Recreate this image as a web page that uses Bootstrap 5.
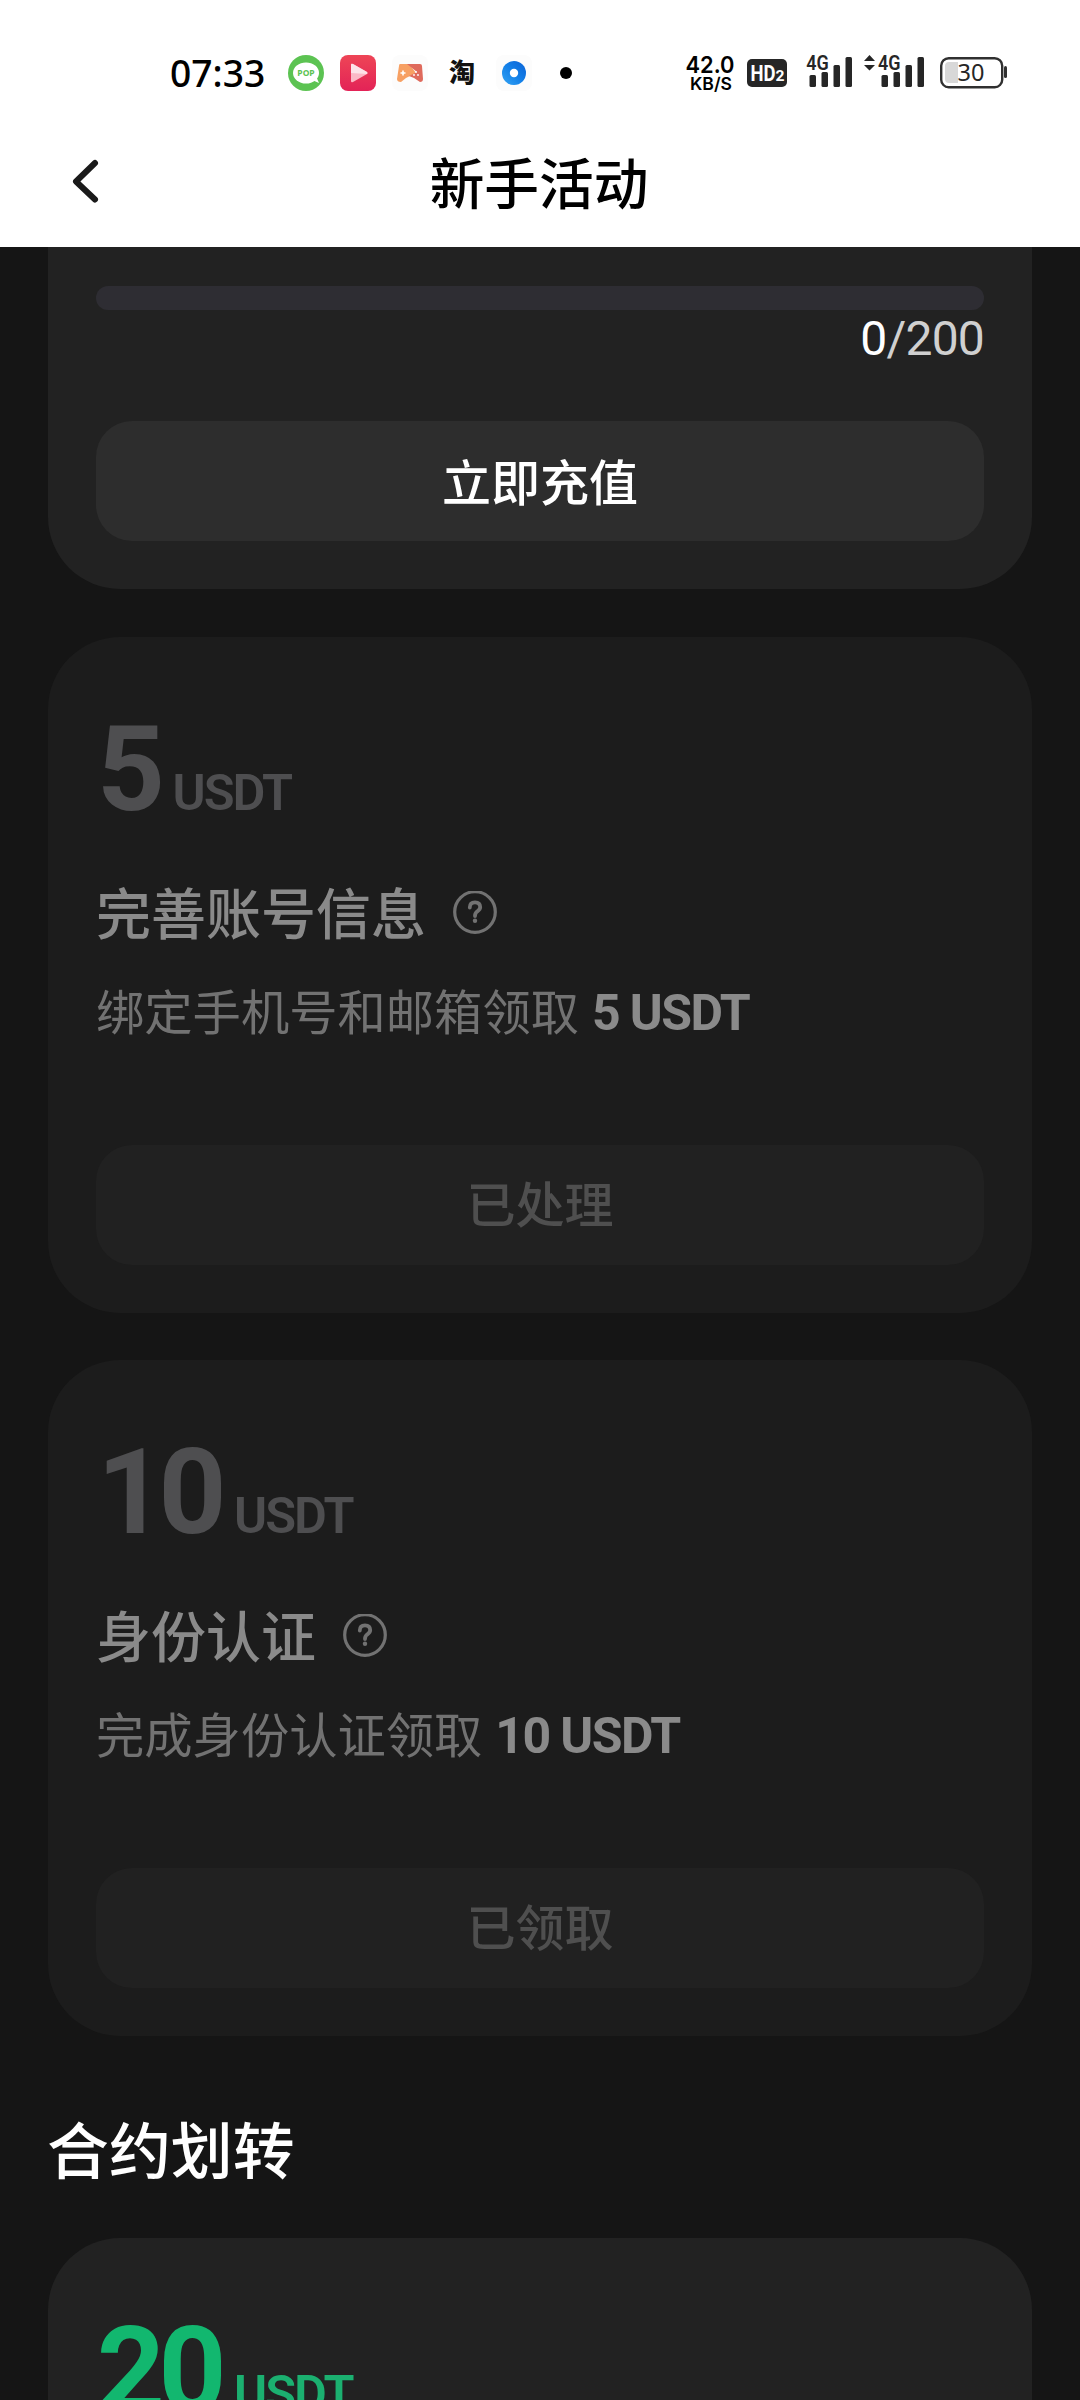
<!DOCTYPE html>
<html lang="zh-CN">
<head>
<meta charset="utf-8">
<meta name="viewport" content="width=device-width, initial-scale=1">
<title>新手活动</title>
<link href="https://cdn.jsdelivr.net/npm/bootstrap@5.3.0/dist/css/bootstrap.min.css" rel="stylesheet">
<style>
  body { font-family: Roboto, "Noto Sans CJK SC", sans-serif; background: #151515; color: #fff; }
  .screen { width: 1080px; height: 2400px; background: #151515; }
  .topbar { height: 247px; background: #fff; color: #000; }
  .status { height: 145px; padding-left: 170px; padding-right: 73px; }
  .status svg { flex: none; display: block; }
  .clock { width: 118px; font: 500 37.2px/52px "Noto Sans", sans-serif; }
  .status-apps { gap: 16px; }
  .titlebar { height: 102px; }
  .page-title { font-size: 54.7px; font-weight: 500; line-height: 80px; padding-bottom: 23px; padding-right: 2px; }
  .back-btn { position: absolute; left: 66px; top: 9px; line-height: 0; }
  .feed { padding: 0 48px; }
  .task { background: #222; border: 0; border-radius: 72px; padding: 61px 48px 48px; color: #fff; }
  .task-first { border-top-left-radius: 0; border-top-right-radius: 0; padding-top: 39px; margin-bottom: 48px; }
  .task-done { background: #1c1c1c; height: 676px; margin-bottom: 47px; }
  .meter { height: 24px; border-radius: 12px; background: #2e2d33; }
  .meter-text { font-size: 48px; line-height: 56px; margin: 1px 0 54px; color: #d0d0d0; letter-spacing: -.8px; }
  .task-btn { height: 120px; border: 0; border-radius: 36px; background: #2d2d2d; color: #fff; font-size: 49px; font-weight: 500; padding: 7px 0 0; }
  .task-done .task-btn { background: #212121; color: #4f4f4f; opacity: 1; padding-top: 4px; }
  .amount { height: 144px; line-height: 144px; font-size: 118.5px; font-weight: 700; letter-spacing: -6.5px; color: #12b76f; white-space: nowrap; padding-left: 1px; }
  .amount .unit { font-size: 50.5px; font-weight: 600; letter-spacing: -2px; color: #1bb070; margin-left: 14px; }
  .task-done .amount, .task-done .amount .unit { color: #4e4e50; }
  .task-title { font-size: 55px; font-weight: 500; line-height: 76px; margin: 34px 0 0; color: #8a8a8a; gap: 26px; }
  .task-title span { padding-top: 2px; line-height: 74px; }
  .task-desc { font-size: 48.3px; line-height: 72px; margin: 25px 0 95px; color: #727272; }
  .task-desc b { font-size: 50px; font-weight: 700; color: #8a8a8a; letter-spacing: -1.6px; margin-left: 1px; }
  .section-title { font-size: 61.9px; font-weight: 500; line-height: 90px; margin: 72px 0 40px -1px; }
  .task-next { border-bottom-left-radius: 0; border-bottom-right-radius: 0; height: 163px; padding-bottom: 0; }
</style>
</head>
<body>
<div class="screen overflow-hidden">
  <header class="topbar">
    <div class="status d-flex align-items-center">
      <span class="clock">07:33</span>
      <div class="status-apps d-flex align-items-center">
        <svg width="36" height="36" viewBox="0 0 36 36"><circle cx="18" cy="18" r="18" fill="#5cc352"/><ellipse cx="18" cy="18" rx="13" ry="10.5" fill="#fff"/><path d="M24 25l7 3-3-7z" fill="#fff"/><text x="18" y="21" text-anchor="middle" font-family="Noto Sans" font-weight="700" font-size="8.5" fill="#5cc352">POP</text></svg>
        <svg width="36" height="36" viewBox="0 0 36 36"><defs><linearGradient id="red" x1="0" y1="0" x2="0" y2="1"><stop offset="0" stop-color="#ee4556"/><stop offset="1" stop-color="#e32357"/></linearGradient></defs><rect width="36" height="36" rx="8" fill="url(#red)"/><path d="M11 10q0-2 2-1l14 8q1 1 0 2l-14 8q-2 1-2-1z" fill="#fbb9c6"/><path d="M11 10q0-2 2-1l14 8q1 1 0 2l-16-1z" fill="#fde3e8"/></svg>
        <svg width="36" height="36" viewBox="0 0 36 36"><rect width="36" height="36" rx="8" fill="#fcfcfc"/><path d="M8 9h9l7 9-10 5-5 4q-4 0-4-3l2-13q0-2 1-2z" fill="#f7a063"/><path d="M15 9h13q2 0 2 2l1 13q0 3-3 3l-6-4-5-2 8-4z" fill="#df6a5c"/><path d="M8.500 18h5M11 15.500v5" stroke="#fff" stroke-width="1.600"/><g fill="#fff"><circle cx="24" cy="17" r=".9"/><circle cx="22" cy="20" r=".9"/><circle cx="26" cy="20" r=".9"/></g></svg>
        <svg width="36" height="48" viewBox="0 -6 36 48"><text x="18" y="27" text-anchor="middle" font-family="Noto Sans CJK SC" font-weight="900" font-size="26" fill="#111">淘</text></svg>
        <svg width="36" height="36" viewBox="0 0 36 36"><defs><linearGradient id="blue" x1="1" y1="0" x2="0" y2="1"><stop offset="0" stop-color="#0b62d6"/><stop offset=".5" stop-color="#1380e8"/><stop offset="1" stop-color="#35a5f4"/></linearGradient></defs><rect width="36" height="36" rx="8" fill="#fcfcfc"/><circle cx="18" cy="18" r="12" fill="url(#blue)"/><circle cx="18" cy="18" r="4.200" fill="#fff"/></svg>
        <svg width="36" height="36" viewBox="0 0 36 36"><circle cx="18" cy="18" r="6"/></svg>
      </div>
      <div class="d-flex align-items-center ms-auto">
        <svg width="52" height="60" viewBox="684 43 52 60" font-family="Inter" font-weight="600"><text x="685.500" y="73" font-size="23.500" textLength="49" lengthAdjust="spacingAndGlyphs">42.0</text><text x="690" y="90" font-size="17.500" textLength="42" lengthAdjust="spacingAndGlyphs">KB/S</text></svg>
        <svg class="ms-2" width="46" height="60" viewBox="744 43 46 60"><rect x="747" y="59" width="40" height="28" rx="5" fill="#262626"/><g fill="#fff" font-family="Roboto" font-weight="700"><text x="750.500" y="81" font-size="21.500" textLength="25" lengthAdjust="spacingAndGlyphs">HD</text><text x="775.500" y="81" font-size="14" textLength="9" lengthAdjust="spacingAndGlyphs">2</text></g></svg>
        <svg class="ms-3" width="48" height="60" viewBox="806 43 48 60" fill="#262626"><text x="806.200" y="70" font-family="Roboto" font-weight="600" font-size="21" textLength="22.500" lengthAdjust="spacingAndGlyphs">4G</text><rect x="809.500" y="75" width="6.500" height="12" rx="1.500"/><rect x="821.500" y="72" width="6.500" height="15" rx="1.500"/><rect x="833.500" y="65" width="6.500" height="22" rx="1.500"/><rect x="845.500" y="57" width="6.500" height="30" rx="1.500"/></svg>
        <svg class="ms-2" width="64" height="60" viewBox="862 43 64 60" fill="#262626"><path d="M869.500 55l5.500 6h-11zM864 65h11l-5.500 5.500z"/><text x="878" y="70" font-family="Roboto" font-weight="600" font-size="21" textLength="22.500" lengthAdjust="spacingAndGlyphs">4G</text><rect x="881.500" y="75" width="6.500" height="12" rx="1.500"/><rect x="893.500" y="72" width="6.500" height="15" rx="1.500"/><rect x="905.500" y="65" width="6.500" height="22" rx="1.500"/><rect x="917.500" y="57" width="6.500" height="30" rx="1.500"/></svg>
        <svg class="ms-2" width="73" height="60" viewBox="934 43 73 60"><path d="M949 62h9v21h-9q-4 0-4-4V66q0-4 4-4z" fill="#d8d8d8"/><rect x="941.200" y="58.200" width="61" height="29" rx="7.500" fill="none" stroke="#303030" stroke-width="2.400"/><rect x="1004" y="66" width="3" height="12" rx="1.500" fill="#303030"/><text x="971" y="81" text-anchor="middle" font-family="Noto Sans" font-size="23.500" fill="#262626">30</text></svg>
      </div>
    </div>
    <div class="titlebar position-relative d-flex align-items-center justify-content-center">
      <a class="back-btn" href="#" aria-label="返回"><svg width="40" height="54" viewBox="66 154 40 54" fill="none" stroke="#1a1a1a" stroke-width="6" stroke-linecap="round" stroke-linejoin="round"><path d="M95 163L76 181.500L95 199.500"/></svg></a>
      <h1 class="page-title m-0">新手活动</h1>
    </div>
  </header>

  <main class="feed">
    <section class="card task task-first">
      <div class="progress meter"><div class="progress-bar" style="width:0%"></div></div>
      <div class="meter-text text-end"><span class="text-white">0</span>/200</div>
      <button class="btn task-btn w-100">立即充值</button>
    </section>

    <section class="card task task-done">
      <div class="amount">5<span class="unit">USDT</span></div>
      <h2 class="task-title d-flex align-items-center"><span>完善账号信息</span>
        <svg width="46" height="46" viewBox="0 0 46 46" fill="none" stroke="#727272" stroke-width="3.200"><circle cx="23" cy="21" r="20.300"/><path d="M17.800 16.500q0-5.200 5.200-5.200t5.200 4.800q0 2.400-2.800 4.200-2.400 1.700-2.400 4.700" stroke-width="3.800" stroke-linecap="round"/><circle cx="23" cy="29.800" r="2.200" fill="#727272" stroke="none"/></svg></h2>
      <p class="task-desc">绑定手机号和邮箱领取 <b>5 USDT</b></p>
      <button class="btn task-btn w-100" disabled>已处理</button>
    </section>

    <section class="card task task-done mb-0">
      <div class="amount">10<span class="unit">USDT</span></div>
      <h2 class="task-title d-flex align-items-center"><span>身份认证</span>
        <svg width="46" height="46" viewBox="0 0 46 46" fill="none" stroke="#727272" stroke-width="3.200"><circle cx="23" cy="21" r="20.300"/><path d="M17.800 16.500q0-5.200 5.200-5.200t5.200 4.800q0 2.400-2.800 4.200-2.400 1.700-2.400 4.700" stroke-width="3.800" stroke-linecap="round"/><circle cx="23" cy="29.800" r="2.200" fill="#727272" stroke="none"/></svg></h2>
      <p class="task-desc">完成身份认证领取 <b>10 USDT</b></p>
      <button class="btn task-btn w-100" disabled>已领取</button>
    </section>

    <h2 class="section-title">合约划转</h2>

    <section class="card task task-next">
      <div class="amount">20<span class="unit">USDT</span></div>
    </section>
  </main>
</div>
<script src="https://cdn.jsdelivr.net/npm/bootstrap@5.3.0/dist/js/bootstrap.bundle.min.js"></script>
</body>
</html>
